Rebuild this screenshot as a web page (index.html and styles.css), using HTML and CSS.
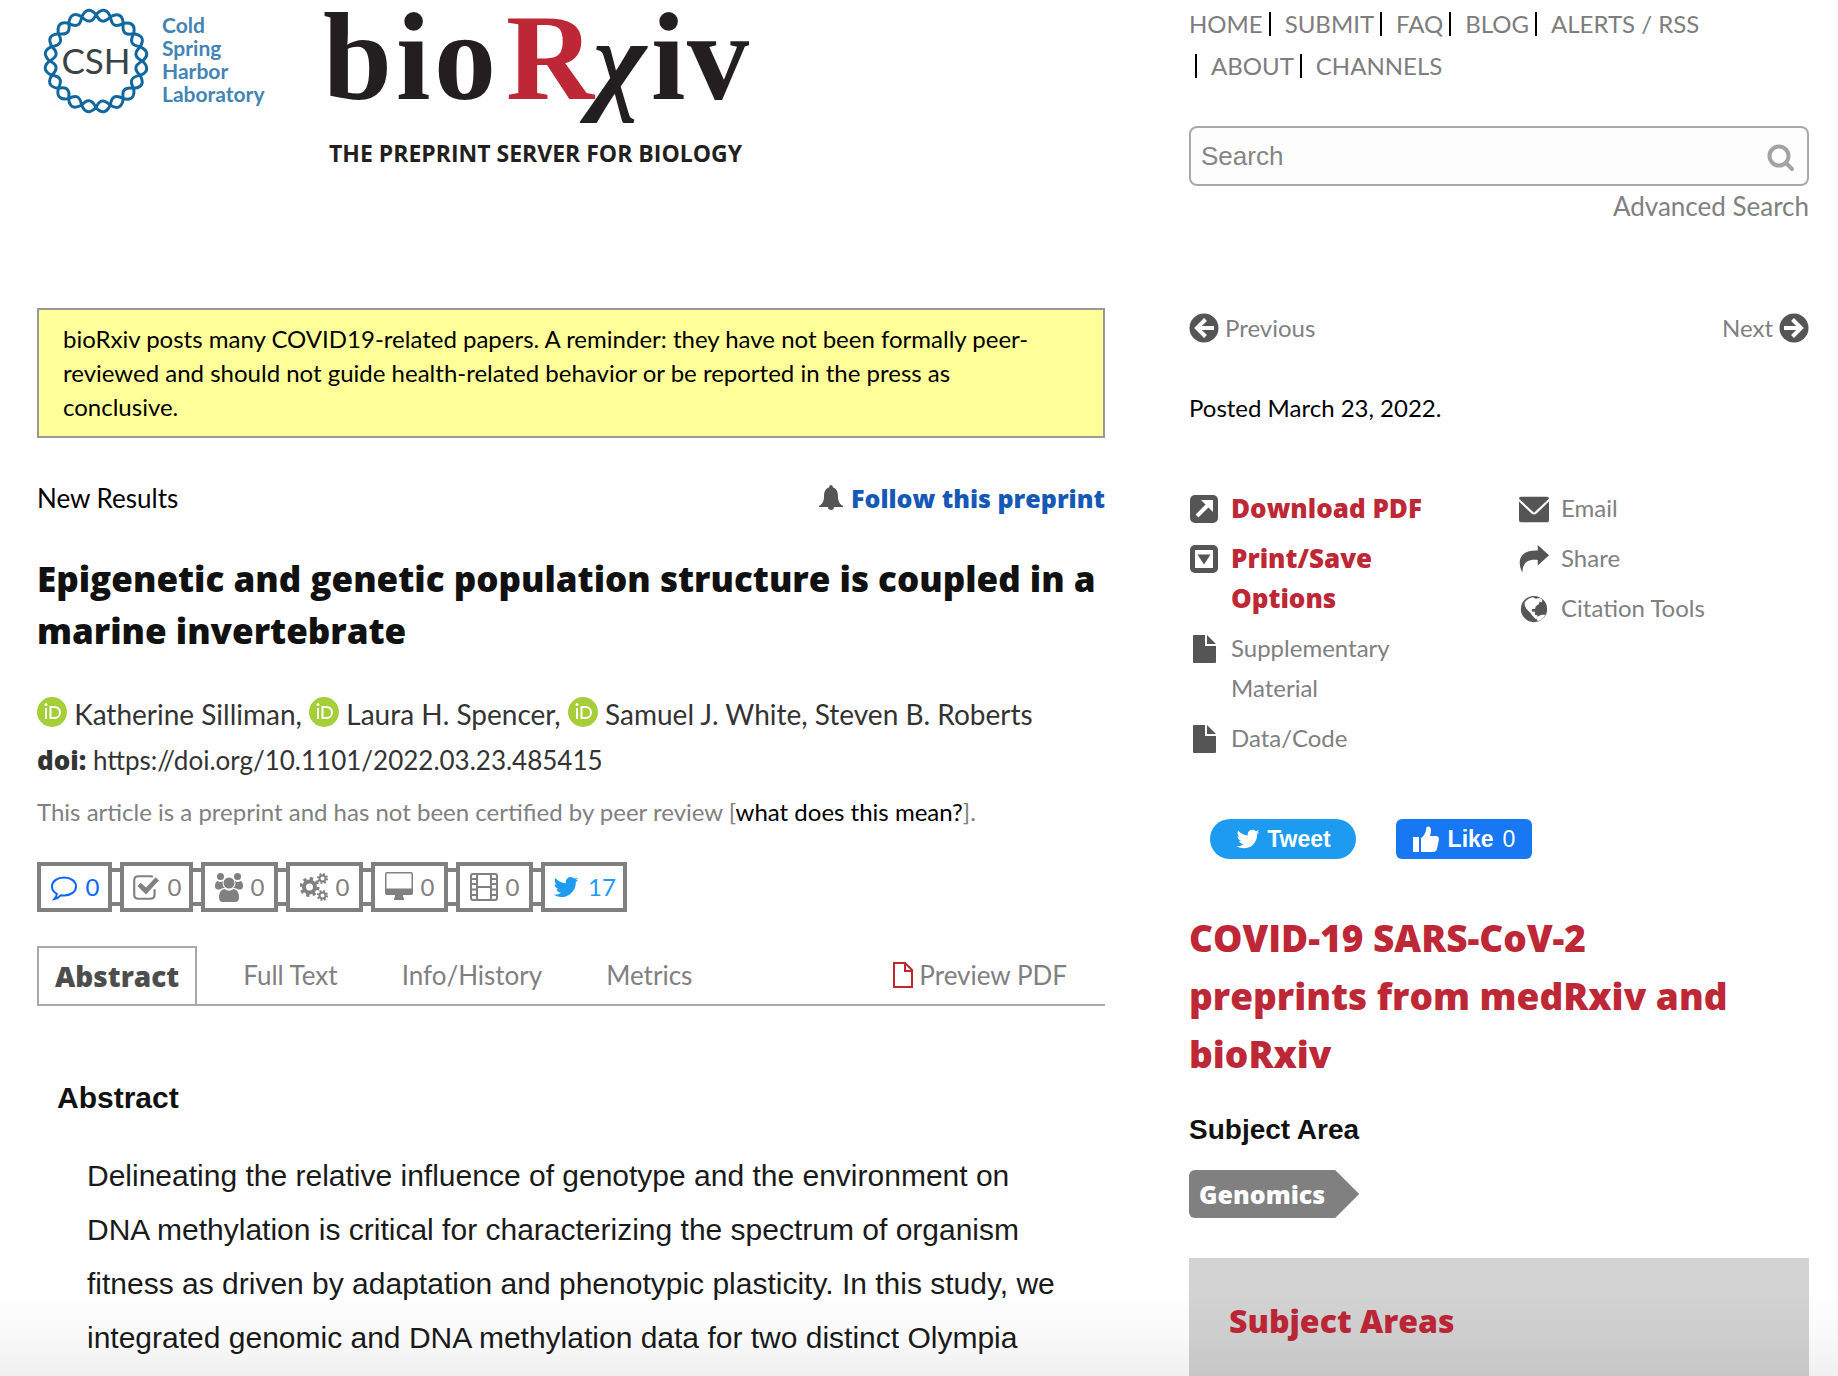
FILE: index.html
```html
<!DOCTYPE html>
<html lang="en">
<head>
<meta charset="utf-8">
<meta name="viewport" content="width=device-width, initial-scale=1">
<title>Epigenetic and genetic population structure is coupled in a marine invertebrate | bioRxiv</title>
<link rel="stylesheet" href="styles.css">
</head>
<body>
<svg class="defs" aria-hidden="true">
  <symbol id="i-twitter" viewBox="0 0 1792 1792"><path d="M1684 408q-67 98-162 167 1 14 1 42 0 130-38 259.500t-115.500 248.500-184.500 210.500-258 146-323 54.500q-271 0-496-145 35 4 78 4 225 0 401-138-105-2-188-64.500t-114-159.500q33 5 61 5 43 0 85-11-112-23-185.500-111.500t-73.500-205.500v-4q68 38 146 41-66-44-105-115t-39-154q0-88 44-163 121 149 294.500 238.500t371.500 99.500q-8-38-8-74 0-134 94.500-228.500t228.500-94.500q140 0 236 102 109-21 205-78-37 115-142 178 93-10 186-50z"/></symbol>
  <symbol id="i-orcid" viewBox="0 0 30 30"><circle cx="15" cy="15" r="15" fill="#a6ce39"/><g fill="none" stroke="#fff" stroke-width="2"><path d="M9 11v11M13.500 10h4c3.500 0 5.500 2.500 5.500 5.500S21 21 17.500 21h-4z"/></g><circle cx="9" cy="7.500" r="1.500" fill="#fff"/></symbol>
  <symbol id="i-file" viewBox="0 0 30 30"><path d="M5 1h11v11h11v16q0 1-1 1H5q-1 0-1-1V2q0-1 1-1zM18 1l9 9h-9z"/></symbol>
</svg>

<header class="page-grid header">
  <div class="brand">
    <a href="#" class="brand-link" aria-label="Cold Spring Harbor Laboratory">
      <svg class="csh" viewBox="0 0 240 120">
        <defs>
          <path id="l1" d="M0-46.500C4-50.500 10-54.500 14.400-44.200C10-39.500 5-36.500 0-46.500"/>
          <g id="l5"><use href="#l1"/><use href="#l1" transform="rotate(18)"/><use href="#l1" transform="rotate(36)"/><use href="#l1" transform="rotate(54)"/><use href="#l1" transform="rotate(72)"/></g>
        </defs>
        <g class="ring" transform="translate(59 61)"><use href="#l5"/><use href="#l5" transform="rotate(90)"/><use href="#l5" transform="rotate(180)"/><use href="#l5" transform="rotate(270)"/></g>
        <text class="csh-mark" x="59" y="74" text-anchor="middle">CSH</text>
        <g class="csh-name"><text x="125" y="33">Cold</text><text x="125" y="56">Spring</text><text x="125" y="79">Harbor</text><text x="125" y="102">Laboratory</text></g>
      </svg>
    </a>
    <a href="#" class="brand-link" aria-label="bioRxiv">
      <svg class="biorxiv" viewBox="0 0 440 175">
        <g class="word"><text x="-2 71 109" y="99">bio</text><text class="red" x="181" y="99">R</text><text class="chi" x="268" y="99">χ</text><text x="326 362" y="99">iv</text></g>
        <text class="tagline" x="4" y="162">THE PREPRINT SERVER FOR BIOLOGY</text>
      </svg>
    </a>
  </div>
  <div class="top-tools">
    <nav class="site-nav" aria-label="Main">
      <ul><li><a href="#">HOME</a></li><li><a href="#">SUBMIT</a></li><li><a href="#">FAQ</a></li><li><a href="#">BLOG</a></li><li><a href="#">ALERTS / RSS</a></li></ul>
      <ul class="second"><li><a href="#">ABOUT</a></li><li><a href="#">CHANNELS</a></li></ul>
    </nav>
    <form class="search" role="search">
      <input type="text" placeholder="Search" aria-label="Search">
      <button type="submit" aria-label="Submit search"><svg viewBox="0 0 28 28"><circle cx="12" cy="12" r="9.500"/><path d="M19 19l6 6"/></svg></button>
    </form>
    <a class="advanced" href="#">Advanced Search</a>
  </div>
</header>

<div class="page-grid body">
  <main>
    <div class="notice">bioRxiv posts many COVID19-related papers. A reminder: they have not been formally peer-<br>reviewed and should not guide health-related behavior or be reported in the press as<br>conclusive.</div>
    <div class="kind">
      <span>New Results</span>
      <a href="#" class="follow"><svg viewBox="0 0 24 26"><path d="M12 0q2 0 2 2.500c4 1 5 5 5 9 0 5 2 8 5 9.500v1H15q0 3-3 3t-3-3H0v-1c3-1.500 5-4.500 5-9.500 0-4 1-8 5-9Q10 0 12 0z"/></svg>Follow this preprint</a>
    </div>
    <h1>Epigenetic and genetic population structure is coupled in a<br>marine invertebrate</h1>
    <p class="authors"><svg><use href="#i-orcid"/></svg> Katherine Silliman, <svg><use href="#i-orcid"/></svg> Laura H. Spencer, <svg><use href="#i-orcid"/></svg> Samuel J. White, Steven B. Roberts</p>
    <p class="doi"><b>doi:</b> https://doi.org/10.1101/2022.03.23.485415</p>
    <p class="caution">This article is a preprint and has not been certified by peer review [<a href="#">what does this mean?</a>].</p>

    <ul class="badges">
      <li class="blue"><a href="#"><svg viewBox="0 0 28 28"><path class="line" d="M14 4.500c7 0 12 4 12 9s-5 9-12 9q-1.500 0-3-.3Q8 25.500 4.500 26q2-2 2.300-5.200C3.500 19 2 16.500 2 13.500c0-5 5-9 12-9z"/></svg>0</a></li>
      <li class="narrow"><a href="#"><svg viewBox="0 0 26 28"><path class="line" d="M21 16v5q0 4-4 4H6q-4 0-4-4V8q0-4 4-4h11q1.500 0 2.500.6"/><path d="M5 13l3-3 5 4.500L22 5l3 3-12 13z"/></svg>0</a></li>
      <li><a href="#"><svg viewBox="0 0 28 30"><circle cx="5.500" cy="4.500" r="3.500"/><circle cx="22.500" cy="4.500" r="3.500"/><path d="M2.500 9q3 2 5.500 0-1.500 4.500 2 7-3-.5-5 1.500H3q-3 0-3-3.500 0-4 2.500-5zM25.500 9q-3 2-5.500 0 1.500 4.500-2 7 3-.5 5 1.500h2q3 0 3-3.500 0-4-2.500-5z"/><circle cx="14" cy="11" r="5.500"/><path d="M9.500 17q4.500 3.500 9 0 5.500.5 5.500 8.500 0 4.500-4 4.500H8q-4 0-4-4.500Q4 17.500 9.500 17z"/></svg>0</a></li>
      <li><a href="#"><svg viewBox="0 0 28 30"><g class="gear"><circle cx="9.500" cy="15" r="5.500" stroke-width="4"/><circle cx="9.500" cy="15" r="8.500" stroke-width="3" stroke-dasharray="3.340"/><circle cx="22.500" cy="6.500" r="3" stroke-width="2"/><circle cx="22.500" cy="6.500" r="4.600" stroke-width="2" stroke-dasharray="1.810"/><circle cx="22.500" cy="23.500" r="3" stroke-width="2"/><circle cx="22.500" cy="23.500" r="4.600" stroke-width="2" stroke-dasharray="1.810"/></g></svg>0</a></li>
      <li><a href="#"><svg viewBox="0 0 28 30"><path fill-rule="evenodd" d="M2 0h24q2 0 2 2v19q0 2-2 2h-8q0 3 1 3.500V28H9v-1.500q1-.5 1-3.500H2q-2 0-2-2V2q0-2 2-2zM1.500 2v14.500h25V2q0-.5-.5-.5H2q-.5 0-.5.500z"/></svg>0</a></li>
      <li><a href="#"><svg viewBox="0 0 28 30"><path class="line" d="M3 2h22q2 0 2 2v22q0 2-2 2H3q-2 0-2-2V4q0-2 2-2zM7 2v26M21 2v26M7 15h14M1 7h6M1 12h6M1 17.500h6M1 23h6M21 7h6M21 12h6M21 17.500h6M21 23h6"/></svg>0</a></li>
      <li class="sky"><a href="#"><svg><use href="#i-twitter"/></svg>17</a></li>
    </ul>

    <nav class="tabs" aria-label="Article">
      <a href="#" class="active" aria-current="page">Abstract</a>
      <a href="#">Full Text</a>
      <a href="#">Info/History</a>
      <a href="#">Metrics</a>
      <a href="#" class="preview"><svg viewBox="0 0 20 26"><path d="M1 1h11l7 7v17H1zM12 1v8h7"/></svg>Preview PDF</a>
    </nav>

    <section class="abstract">
      <h2>Abstract</h2>
      <p>Delineating the relative influence of genotype and the environment on<br>DNA methylation is critical for characterizing the spectrum of organism<br>fitness as driven by adaptation and phenotypic plasticity. In this study, we<br>integrated genomic and DNA methylation data for two distinct Olympia</p>
    </section>
  </main>

  <aside>
    <nav class="pager" aria-label="Articles">
      <a href="#"><svg viewBox="0 0 30 30"><circle cx="15" cy="15" r="14.500"/><path class="cut" d="M25 15H9M16.500 6.500L8 15l8.500 8.500"/></svg>Previous</a>
      <a href="#">Next<svg viewBox="0 0 30 30"><circle cx="15" cy="15" r="14.500"/><path class="cut" d="M5 15h16M13.500 6.500L22 15l-8.500 8.500"/></svg></a>
    </nav>
    <p class="posted">Posted March 23, 2022.</p>
    <div class="tools">
      <ul>
        <li><a href="#" class="strong"><svg viewBox="0 0 30 30"><rect x="1" y="1" width="28" height="28" rx="5"/><path class="cut" d="M8 22L20 10"/><path fill="#fff" d="M12 6h12v12l-4-4-4-4z"/></svg>Download PDF</a></li>
        <li><a href="#" class="strong"><svg viewBox="0 0 30 30"><rect x="1" y="1" width="28" height="28" rx="5"/><path fill="#fff" d="M6 6h18v18H6z"/><path d="M8.500 10.500h13L15 20.500z"/></svg><span>Print/Save<br>Options</span></a></li>
        <li><a href="#"><svg><use href="#i-file"/></svg><span>Supplementary<br>Material</span></a></li>
        <li><a href="#"><svg><use href="#i-file"/></svg>Data/Code</a></li>
      </ul>
      <ul>
        <li><a href="#"><svg viewBox="0 0 32 30"><path d="M2 2h28q2 0 2 2L16 19 0 4q0-2 2-2zM0 7l13 12.500q3 2.500 6 0L32 7v20q0 2-2 2H2q-2 0-2-2z"/></svg>Email</a></li>
        <li><a href="#"><svg viewBox="0 0 32 30"><path d="M20 0l12 11-12 11v-6C10 15 4 18 3.500 29.500-3 16 2 5 20 6z"/></svg>Share</a></li>
        <li><a href="#"><svg viewBox="0 0 32 30"><circle cx="16" cy="15" r="14"/><path fill="#fff" d="M6 8q4-5 9-5.500l3 1.500 4-1 3 2-1 3-2-1-1 3-3 2-1 3-3 0 0 3 3 0 0 3 3 1-2 4-3-3-3-4-4-4-2-4zM18 24l6-3h4q-2 5-8 7z"/></svg>Citation Tools</a></li>
      </ul>
    </div>
    <div class="social">
      <button type="button" class="tweet"><svg><use href="#i-twitter"/></svg>Tweet</button>
      <button type="button" class="like"><svg viewBox="0 0 26 26"><path d="M0 11h6v15H0zM8 12c3-2 5-5 5.500-11q4-2 4.500 3 0 3-1 6h6.500q2.500.5 2.500 3l-2 10q-1 3-4 3H8z"/></svg><b>Like</b> <span>0</span></button>
    </div>
    <h2 class="covid"><a href="#">COVID-19 SARS-CoV-2<br>preprints from medRxiv and<br>bioRxiv</a></h2>
    <h3 class="area">Subject Area</h3>
    <a href="#" class="tag">Genomics</a>
    <section class="areas"><h2>Subject Areas</h2></section>
  </aside>
</div>
</body>
</html>
```

FILE: styles.css
```css
*, *::before, *::after { box-sizing: border-box; }

:root {
  --heavy: "Open Sans", "Noto Sans", sans-serif;
  --plain: "Liberation Sans", Arial, sans-serif;
}

body {
  margin: 0;
  min-height: 100vh;
  background: #fff;
  color: #000;
  font: 24px/40px Lato, "Liberation Sans", sans-serif;
}

/* soft shade along the bottom edge of the window */
body::after {
  content: "";
  position: fixed;
  left: 0;
  right: 0;
  bottom: 0;
  height: 88px;
  background: linear-gradient(rgba(0, 0, 0, 0), rgba(0, 0, 0, .02) 50%, rgba(0, 0, 0, .06));
  pointer-events: none;
}

h1, h2, h3, p, ul { margin: 0; padding: 0; }
ul { list-style: none; }
a { color: inherit; text-decoration: none; }
.defs { display: none; }

.page-grid {
  display: grid;
  grid-template-columns: minmax(0, 1068fr) minmax(0, 620fr);
  column-gap: 84px;
  padding: 0 29px 0 37px;
}

/* header */
.header { min-height: 308px; align-items: start; }
.brand { display: flex; gap: 48px; }
.brand svg { display: block; overflow: visible; }
.csh { width: 240px; height: 120px; }
.biorxiv { width: 440px; height: 175px; }
.ring { fill: none; stroke: #12679f; stroke-width: 3; }
.csh-mark { font: 35px Lato, sans-serif; fill: #3a4444; }
.csh-name { font: bold 21px Lato, sans-serif; fill: #4384b5; }
.word { font: bold 124px "Liberation Serif", serif; fill: #231f20; }
.word .red { font-size: 122px; fill: #bd2736; }
.word .chi { font-size: 114px; font-style: italic; }
.tagline { font: bold 23px var(--heavy); fill: #231f20; }

.top-tools { display: flex; flex-direction: column; padding-top: 3px; }
.site-nav { color: #7d7d7d; line-height: 42px; }
.site-nav ul { display: flex; }
.site-nav li { display: flex; align-items: center; white-space: nowrap; }
.site-nav li + li::before,
.site-nav .second li::before {
  content: "";
  width: 2px;
  height: 24px;
  margin: 0 14px 0 6px;
  background: #000;
}
.search {
  display: flex;
  align-items: center;
  height: 60px;
  margin-top: 39px;
  padding: 0 12px 0 10px;
  border: 2px solid #a9a9a9;
  border-radius: 8px;
  background: #fdfdfd;
}
.search input {
  flex: 1;
  min-width: 0;
  padding: 0;
  border: 0;
  outline: 0;
  background: none;
  font: 26px var(--plain);
}
.search input::placeholder { color: #858585; opacity: 1; }
.search button { padding: 4px 0 0; border: 0; background: none; }
.search svg { display: block; width: 28px; height: 28px; fill: none; stroke: #a3a3a3; stroke-width: 4; stroke-linecap: round; }
.advanced { align-self: flex-end; color: #808080; font-size: 26px; }

/* article */
.notice {
  padding: 12px 24px;
  border: 2px solid #999;
  background: #ff9;
  line-height: 34px;
}
.kind { display: flex; justify-content: space-between; margin-top: 40px; font-size: 26px; }
.follow { display: flex; align-items: center; gap: 8px; color: #1558b6; font: 800 25px/36px var(--heavy); }
.follow svg { width: 24px; height: 26px; fill: #555; }
h1 { margin-top: 35px; color: #111; font: 800 35px/52px var(--heavy); }
.authors, .doi { color: #333; font-size: 28px; line-height: 46px; }
.doi { font-size: 26px; }
.authors { margin-top: 34px; }
.authors svg { width: 30px; height: 30px; vertical-align: -2px; }
.doi b { font-family: var(--heavy); font-weight: 800; }
.caution { margin-top: 9px; color: #808080; }
.caution a { color: #000; }

.badges { display: flex; gap: 8px; margin-top: 30px; color: #808080; }
.badges li { position: relative; }
.badges a { display: flex; align-items: center; justify-content: center; gap: 8px; width: 77px; height: 50px; border: 4px solid #808080; }
.badges .narrow a { width: 73px; }
.badges .blue a { width: 75px; }
.badges .sky a { width: 86px; }
.badges svg { width: 28px; height: 30px; fill: currentColor; }
.badges .line { fill: none; stroke: currentColor; stroke-width: 2; }
.badges .gear { fill: none; stroke: currentColor; }
.badges li + li::before {
  content: "";
  position: absolute;
  top: 6px;
  right: 100%;
  width: 8px;
  height: 38px;
  border: solid #808080;
  border-width: 4px 0;
}
.blue { color: #0a66ff; }
.sky { color: #1d9bf0; }

.tabs { display: flex; margin-top: 34px; border-bottom: 2px solid #a9a9a9; color: #808080; font-size: 26px; line-height: 58px; }
.tabs a { margin-right: 28px; padding: 0 18px; }
.tabs .active { padding: 0 16px; border: 2px solid #a9a9a9; border-bottom: 0; color: #4d4d4d; font: 800 28px/56px var(--heavy); }
.tabs .preview { display: flex; align-items: center; gap: 6px; margin-left: auto; margin-right: 20px; }
.preview svg { width: 20px; height: 26px; fill: none; stroke: #c1272d; stroke-width: 2; }

.abstract { padding: 72px 20px 0; color: #1a1a1a; font-family: var(--plain); }
.abstract h2 { color: #111; font-size: 30px; line-height: 40px; }
.abstract p { margin-top: 31px; padding-left: 30px; font-size: 30px; line-height: 54px; }

/* sidebar */
aside { display: flex; flex-direction: column; color: #808080; }
.pager { display: flex; justify-content: space-between; }
.pager a { display: flex; align-items: center; gap: 6px; }
.pager svg { width: 30px; height: 30px; fill: #555; }
.cut { fill: none; stroke: #fff; stroke-width: 4; }
.posted { margin-top: 40px; color: #000; }
.tools { display: grid; grid-template-columns: 330px 1fr; margin-top: 60px; }
.tools ul { display: grid; gap: 10px; align-content: start; }
.tools a { display: flex; gap: 12px; }
.tools svg { flex: none; width: 30px; height: 30px; margin-top: 6px; fill: #555; }
.tools .strong { color: #bd2736; font: 800 26px/40px var(--heavy); }
.social { display: flex; gap: 40px; margin-top: 61px; padding-left: 21px; }
.social button { display: flex; align-items: center; justify-content: center; height: 40px; padding: 0; border: 0; color: #fff; font: bold 23px var(--plain); }
.social svg { width: 26px; height: 26px; fill: #fff; }
.social .tweet { gap: 6px; width: 146px; border-radius: 20px; background: #1d9bf0; }
.social .like { gap: 9px; width: 136px; border-radius: 6px; background: #1877f2; }
.like span { font-weight: normal; }
.covid { margin-top: 50px; color: #bd2736; font: 800 37px/58px var(--heavy); }
.area { margin-top: 27px; color: #111; font: bold 28px/40px var(--plain); }
.tag {
  align-self: flex-start;
  margin-top: 20px;
  padding: 0 34px 0 10px;
  border-radius: 6px 0 0 6px;
  background: #808080;
  color: #fff;
  font: 800 25px/48px var(--heavy);
  clip-path: polygon(0 0, calc(100% - 24px) 0, 100% 50%, calc(100% - 24px) 100%, 0 100%);
}
.areas { margin-top: 40px; padding: 40px 40px 32px; background: #d3d3d3; color: #bd2736; }
.areas h2 { font: 800 32px/46px var(--heavy); }
```
